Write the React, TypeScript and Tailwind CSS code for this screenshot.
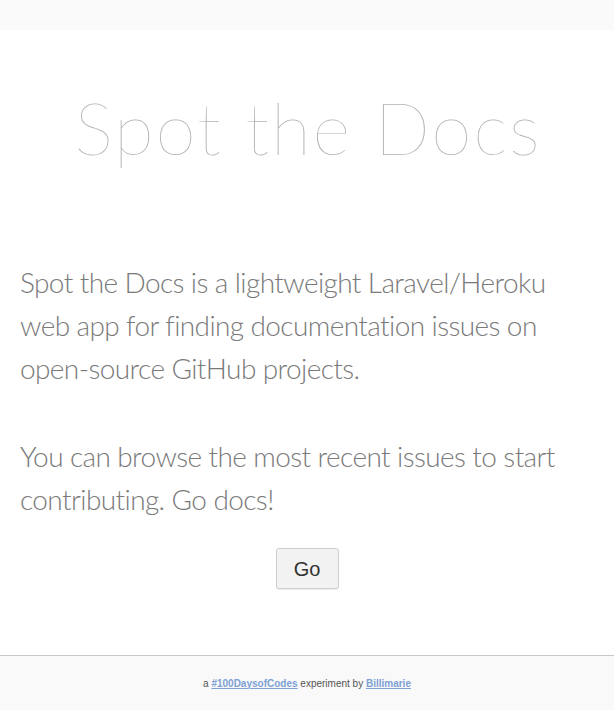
const App = () => {
    return (
        <div className="min-h-[710px] w-full flex flex-col bg-white">
            <div className="h-[30px] bg-[#fafafa]" />
            <main className="flex-1 px-5">
                <h1
                    className="pt-[53px] pl-[2px] text-center text-[73px] leading-[88px] font-thin text-[#b0b0b0] tracking-[1.8px]"
                    style={{ fontFamily: 'Lato, sans-serif' }}
                >
                    Spot the Docs
                </h1>
                <div
                    className="mt-[90px] text-[28px] leading-[43px] font-light text-[#7a7a7a] tracking-[-0.6px]"
                    style={{ fontFamily: 'Lato, sans-serif' }}
                >
                    <p>
                        Spot the Docs is a lightweight Laravel/Heroku web app
                        for finding documentation issues on open-source GitHub
                        projects.
                    </p>
                    <p className="mt-[45px]">
                        You can browse the most recent issues to start
                        contributing. Go docs!
                    </p>
                </div>
                <div className="flex justify-center mt-[27px]">
                    <button
                        className="h-[41px] w-[63px] rounded-[3px] border border-[#cfcfcf] bg-[#f2f2f2] text-[20px] text-[#333] shadow-[0_1px_1px_rgba(0,0,0,0.08)]"
                        style={{ fontFamily: '"Liberation Sans", Arial, sans-serif' }}
                    >
                        Go
                    </button>
                </div>
            </main>
            <footer
                className="mt-[64px] h-[55px] border-t border-[#c8c8c8] bg-[#f9f9f9] flex items-center justify-center text-[10px] text-[#555]"
                style={{ fontFamily: '"Liberation Sans", Arial, sans-serif' }}
            >
                <p>
                    a{' '}
                    <a href="#" className="font-bold text-[#7da1d4] underline">
                        #100DaysofCodes
                    </a>{' '}
                    experiment by{' '}
                    <a href="#" className="font-bold text-[#7da1d4] underline">
                        Billimarie
                    </a>
                </p>
            </footer>
        </div>
    );
};

export default App;
